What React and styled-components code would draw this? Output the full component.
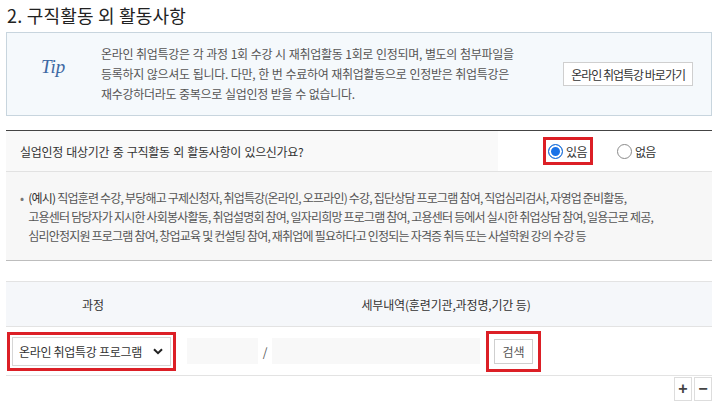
import React from 'react';
import styled, { createGlobalStyle } from 'styled-components';

const GlobalStyle = createGlobalStyle`
  body {
    margin: 0;
    background: #fff;
    font-family: "Noto Sans CJK KR", "Noto Sans", sans-serif;
    color: #333;
  }
`;

const RED = '#dc1f26';

const Page = styled.div`
  width: 706px;
  padding: 3px 6px 0 6px;
`;

const Title = styled.h2`
  margin: 0 0 5px 1px;
  font-size: 18px;
  line-height: 24px;
  font-weight: 400;
  color: #222;
  letter-spacing: 0.2px;
`;

const TipBox = styled.div`
  display: flex;
  align-items: center;
  height: 82px;
  border: 1px solid #c8d5de;
  background: #f5f9fc;
`;

const TipMark = styled.div`
  width: 94px;
  padding-left: 34px;
  box-sizing: border-box;
  font-family: "Liberation Serif", serif;
  font-style: italic;
  font-size: 19px;
  color: #3d68a3;
  margin-top: -14px;
`;

const TipText = styled.p`
  flex: 1;
  margin: 0;
  font-size: 12px;
  line-height: 20px;
  color: #555;
  letter-spacing: -0.3px;
  word-spacing: 0.5px;
`;

const LinkButton = styled.button`
  margin-right: 18px;
  height: 24px;
  padding: 0 7px;
  border: 1px solid #cfcfcf;
  background: #fff;
  font-family: inherit;
  font-size: 12px;
  color: #333;
  letter-spacing: -1px;
`;

const QuestionRow = styled.div`
  display: flex;
  margin-top: 14px;
  border-top: 1px solid #444;
  border-bottom: 1px solid #e2e2e2;
  height: 40px;
`;

const QuestionCell = styled.div`
  flex: 1;
  display: flex;
  align-items: center;
  padding-left: 14px;
  background: #f9f9f9;
  font-size: 12px;
  color: #333;
  letter-spacing: -0.3px;
  word-spacing: 1px;
`;

const AnswerCell = styled.div`
  width: 214px;
  display: flex;
  align-items: center;
  padding-left: 45px;
  box-sizing: border-box;
  gap: 24px;
`;

const Highlight = styled.div`
  display: inline-flex;
  align-items: center;
  border: 3px solid ${RED};
  padding: ${p => p.$pad || '0'};
  box-sizing: border-box;
`;

const RadioLabel = styled.label`
  display: inline-flex;
  align-items: center;
  gap: 3px;
  font-size: 12px;
  color: #333;
  letter-spacing: -0.6px;
`;

const RadioDot = styled.span`
  width: 15px;
  height: 15px;
  border-radius: 50%;
  box-sizing: border-box;
  border: 1px solid ${p => (p.$checked ? '#1a6fd6' : '#8a8a8a')};
  background: ${p => (p.$checked ? '#1a73e8' : '#fff')};
  box-shadow: ${p => (p.$checked ? 'inset 0 0 0 2px #fff' : 'none')};
`;

const ExampleBox = styled.div`
  background: #f7f7f7;
  border-bottom: 1px solid #bdbdbd;
  padding: 16px 14px 15px 14px;
  display: flex;
  gap: 5px;
  font-size: 12px;
  line-height: 19px;
  color: #555;
  letter-spacing: -0.8px;
`;

const Bullet = styled.span`
  color: #777;
`;

const ExampleText = styled.p`
  margin: 0;
`;

const Lead = styled.span`
  color: #333;
`;

const CourseTable = styled.div`
  margin-top: 20px;
`;

const HeaderRow = styled.div`
  display: grid;
  grid-template-columns: 174px 1fr;
  height: 44px;
  align-items: center;
  background: #f5f7fa;
  border-top: 1px solid #e3e3e3;
  border-bottom: 1px solid #e3e3e3;
  font-size: 12px;
  color: #333;
  text-align: center;
  letter-spacing: -0.15px;
`;

const BodyRow = styled.div`
  display: grid;
  grid-template-columns: 174px 1fr;
  height: 48px;
  align-items: center;
  border-bottom: 1px solid #e3e3e3;
`;

const SelectCell = styled.div`
  padding-left: 1px;
`;

const SelectBox = styled.div`
  width: 159px;
  height: 29px;
  display: flex;
  align-items: center;
  justify-content: space-between;
  padding: 0 7px 0 6px;
  box-sizing: border-box;
  border: 1px solid #d6d6d6;
  background: #fff;
  font-size: 12px;
  color: #333;
  letter-spacing: -0.3px;
`;

const DetailCell = styled.div`
  display: flex;
  align-items: center;
  padding-left: 7px;
`;

const Field = styled.div`
  width: ${p => p.$w}px;
  height: 26px;
  background: #f8f8f8;
`;

const Slash = styled.span`
  width: 14px;
  text-align: center;
  font-size: 12px;
  color: #555;
`;

const SearchButton = styled.button`
  width: 39px;
  height: 25px;
  padding: 0;
  border: 1px solid #cfcfcf;
  background: #fff;
  font-family: inherit;
  font-size: 12px;
  color: #555;
`;

const Controls = styled.div`
  display: flex;
  justify-content: flex-end;
  gap: 2px;
  margin-top: 1px;
`;

const SquareButton = styled.button`
  width: 18px;
  height: 24px;
  padding: 0;
  border: 1px solid #ddd;
  background: #fff;
  font-family: "Liberation Sans", sans-serif;
  font-size: 16px;
  font-weight: 700;
  color: #444;
  line-height: 20px;
`;

const Chevron = () => (
  <svg width="10" height="7" viewBox="0 0 10 7">
    <path d="M1 1.2 L5 5.2 L9 1.2" fill="none" stroke="#222" strokeWidth="2" />
  </svg>
);

const App = () => (
  <>
    <GlobalStyle />
    <Page>
      <Title>2. 구직활동 외 활동사항</Title>

      <TipBox>
        <TipMark>Tip</TipMark>
        <TipText>
          온라인 취업특강은 각 과정 1회 수강 시 재취업활동 1회로 인정되며, 별도의 첨부파일을
          <br />
          등록하지 않으셔도 됩니다. 다만, 한 번 수료하여 재취업활동으로 인정받은 취업특강은
          <br />
          재수강하더라도 중복으로 실업인정 받을 수 없습니다.
        </TipText>
        <LinkButton>온라인 취업특강 바로가기</LinkButton>
      </TipBox>

      <QuestionRow>
        <QuestionCell>실업인정 대상기간 중 구직활동 외 활동사항이 있으신가요?</QuestionCell>
        <AnswerCell>
          <Highlight $pad="0 3px 0 2px" style={{ height: 28 }}>
            <RadioLabel>
              <RadioDot $checked />
              있음
            </RadioLabel>
          </Highlight>
          <RadioLabel>
            <RadioDot />
            없음
          </RadioLabel>
        </AnswerCell>
      </QuestionRow>

      <ExampleBox>
        <Bullet>•</Bullet>
        <ExampleText>
          <Lead>(예시)</Lead> 직업훈련 수강, 부당해고 구제신청자, 취업특강(온라인, 오프라인) 수강, 집단상담 프로그램 참여, 직업심리검사, 자영업 준비활동,
          <br />
          고용센터 담당자가 지시한 사회봉사활동, 취업설명회 참여, 일자리희망 프로그램 참여, 고용센터 등에서 실시한 취업상담 참여, 일용근로 제공,
          <br />
          심리안정지원 프로그램 참여, 창업교육 및 컨설팅 참여, 재취업에 필요하다고 인정되는 자격증 취득 또는 사설학원 강의 수강 등
        </ExampleText>
      </ExampleBox>

      <CourseTable>
        <HeaderRow>
          <span>과정</span>
          <span>세부내역(훈련기관,과정명,기간 등)</span>
        </HeaderRow>
        <BodyRow>
          <SelectCell>
            <Highlight $pad="2px">
              <SelectBox>
                온라인 취업특강 프로그램
                <Chevron />
              </SelectBox>
            </Highlight>
          </SelectCell>
          <DetailCell>
            <Field $w={71} />
            <Slash>/</Slash>
            <Field $w={208} />
            <Highlight $pad="5px 5px" style={{ marginLeft: 6 }}>
              <SearchButton>검색</SearchButton>
            </Highlight>
          </DetailCell>
        </BodyRow>
      </CourseTable>

      <Controls>
        <SquareButton>+</SquareButton>
        <SquareButton>−</SquareButton>
      </Controls>
    </Page>
  </>
);

export default App;
